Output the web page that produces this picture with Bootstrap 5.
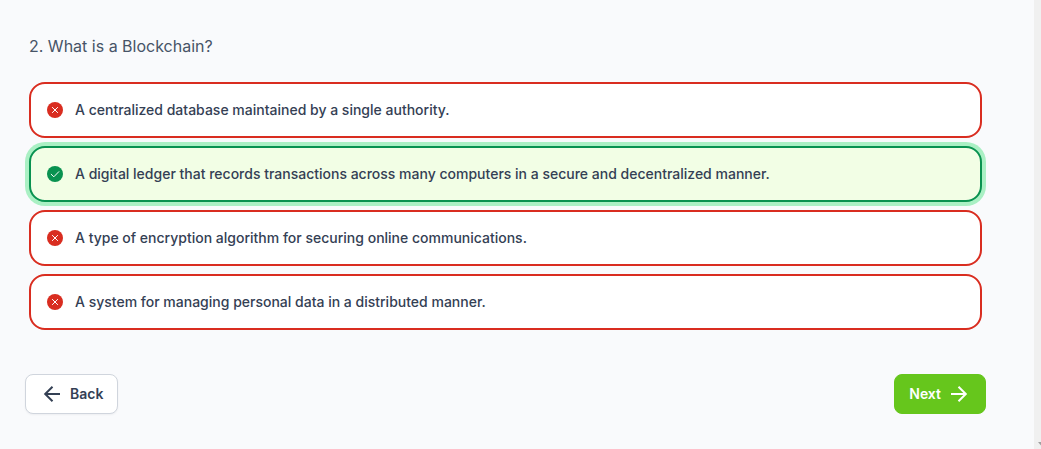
<!DOCTYPE html>
<html lang="en">
<head>
<meta charset="utf-8">
<meta name="viewport" content="width=device-width, initial-scale=1">
<title>Blockchain quiz</title>
<link href="https://cdn.jsdelivr.net/npm/bootstrap@5.3.0/dist/css/bootstrap.min.css" rel="stylesheet">
<style>
  body { background: #f9fafc; font-family: Inter, sans-serif; color: #344054; }
  .quiz { padding: 34px 48px 35px 25px; }
  .quiz-question { padding: 0 4px; margin: 0; }
  .quiz-question legend { font-size: 16px; line-height: 24px; color: #475467; margin-bottom: 24px; }
  .answer { border: 2px solid #d92d20; border-radius: 16px; background: #fff; padding: 16px; gap: 12px; font-size: 14px; line-height: 20px; font-weight: 500; }
  .answer .form-check-input { width: 16px; height: 16px; margin: 0; border: 0; background: #d92d20 center / 16px no-repeat url("data:image/svg+xml,%3Csvg xmlns='http://www.w3.org/2000/svg' viewBox='0 0 16 16'%3E%3Cpath d='M5.4 5.4l5.2 5.2M10.6 5.4l-5.2 5.2' stroke='white' stroke-width='1' stroke-linecap='round'/%3E%3C/svg%3E"); }
  .answer-correct { border-color: #099250; background: #f2fee5; box-shadow: 0 0 0 4px #aaf0c4; }
  .answer-correct .form-check-input { background-color: #099250; background-image: url("data:image/svg+xml,%3Csvg xmlns='http://www.w3.org/2000/svg' viewBox='0 0 16 16'%3E%3Cpath d='M4.2 8.3l2.6 2.5 5-5.1' fill='none' stroke='white' stroke-width='1' stroke-linecap='round' stroke-linejoin='round'/%3E%3C/svg%3E") !important; box-shadow: none; }
  .btn-step { height: 40px; border-radius: 8px; font-size: 14px; line-height: 20px; font-weight: 600; gap: 6px; padding: 0 14px; }
  .btn-back, .btn-back:hover { background: #fff; border-color: #d0d5dd; color: #344054; box-shadow: 0 1px 2px rgba(16,24,40,.05); }
  .btn-next, .btn-next:hover { background: #66c61c; border-color: #66c61c; color: #fff; }
  .scroll-track { width: 7px; background: #f0f0f0; padding-bottom: 3px; overflow: hidden; }
</style>
</head>
<body>
<div class="d-flex min-vh-100">
  <main class="quiz flex-grow-1 d-flex flex-column justify-content-between">
    <fieldset class="quiz-question">
      <legend>2. What is a Blockchain?</legend>
      <div class="d-flex flex-column gap-2">
        <label class="answer d-flex align-items-center"><input class="form-check-input" type="radio" name="answer"><span class="d-block flex-grow-1">A centralized database maintained by a single authority.</span></label>
        <label class="answer answer-correct d-flex align-items-center"><input class="form-check-input" type="radio" name="answer" checked><span class="d-block flex-grow-1">A digital ledger that records transactions across many computers in a secure and decentralized manner.</span></label>
        <label class="answer d-flex align-items-center"><input class="form-check-input" type="radio" name="answer"><span class="d-block flex-grow-1">A type of encryption algorithm for securing online communications.</span></label>
        <label class="answer d-flex align-items-center"><input class="form-check-input" type="radio" name="answer"><span class="d-block flex-grow-1">A system for managing personal data in a distributed manner.</span></label>
      </div>
    </fieldset>
    <div class="d-flex justify-content-between">
      <button type="button" class="btn btn-step btn-back d-flex align-items-center">
        <svg width="24" height="24" viewBox="0 0 24 24" fill="none" stroke="currentColor" stroke-width="2" aria-hidden="true"><path d="M20 12H5M12.5 4.7L5.2 12l7.3 7.3"/></svg>
        Back
      </button>
      <button type="button" class="btn btn-step btn-next d-flex align-items-center">
        Next
        <svg width="24" height="24" viewBox="0 0 24 24" fill="none" stroke="currentColor" stroke-width="2" aria-hidden="true"><path d="M4 12h15M11.5 4.7l7.3 7.3-7.3 7.3"/></svg>
      </button>
    </div>
  </main>
  <div class="scroll-track d-flex align-items-end flex-shrink-0" aria-hidden="true">
    <svg class="ms-1 flex-shrink-0" width="7" height="4" viewBox="0 0 7 4"><path d="M0 0h7L3.5 4z" fill="#a0a0a0"/></svg>
  </div>
</div>
<script src="https://cdn.jsdelivr.net/npm/bootstrap@5.3.0/dist/js/bootstrap.bundle.min.js"></script>
</body>
</html>
